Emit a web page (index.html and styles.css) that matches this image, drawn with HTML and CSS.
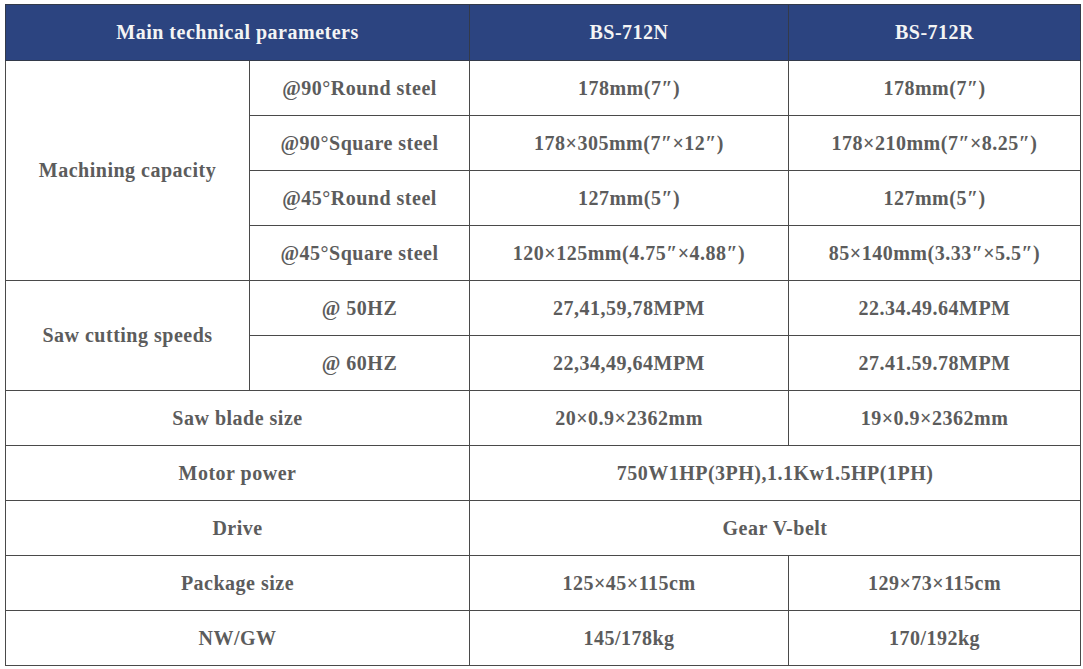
FILE: index.html
```html
<!DOCTYPE html>
<html>
<head>
<meta charset="utf-8">
<link rel="stylesheet" href="styles.css">
</head>
<body>
<table class="spec">
<colgroup>
<col class="c1"><col class="c2"><col class="c3"><col class="c4">
</colgroup>
<thead>
<tr><th colspan="2">Main technical parameters</th><th>BS-712N</th><th>BS-712R</th></tr>
</thead>
<tbody>
<tr><td rowspan="4">Machining capacity</td><td>@90°Round steel</td><td>178mm(7″)</td><td>178mm(7″)</td></tr>
<tr><td>@90°Square steel</td><td>178×305mm(7″×12″)</td><td>178×210mm(7″×8.25″)</td></tr>
<tr><td>@45°Round steel</td><td>127mm(5″)</td><td>127mm(5″)</td></tr>
<tr><td>@45°Square steel</td><td>120×125mm(4.75″×4.88″)</td><td>85×140mm(3.33″×5.5″)</td></tr>
<tr><td rowspan="2">Saw cutting speeds</td><td>@ 50HZ</td><td>27,41,59,78MPM</td><td>22.34.49.64MPM</td></tr>
<tr><td>@ 60HZ</td><td>22,34,49,64MPM</td><td>27.41.59.78MPM</td></tr>
<tr><td colspan="2">Saw blade size</td><td>20×0.9×2362mm</td><td>19×0.9×2362mm</td></tr>
<tr><td colspan="2">Motor power</td><td colspan="2">750W1HP(3PH),1.1Kw1.5HP(1PH)</td></tr>
<tr><td colspan="2">Drive</td><td colspan="2">Gear V-belt</td></tr>
<tr><td colspan="2">Package size</td><td>125×45×115cm</td><td>129×73×115cm</td></tr>
<tr><td colspan="2">NW/GW</td><td>145/178kg</td><td>170/192kg</td></tr>
</tbody>
</table>
</body>
</html>
```
FILE: styles.css
```css
html, body {
  margin: 0;
  padding: 0;
  background: #ffffff;
}
body {
  padding: 4px 0 0 5px;
}
.spec {
  border-collapse: collapse;
  table-layout: fixed;
  width: 1075px;
  font-family: "Liberation Serif", "Times New Roman", serif;
  font-weight: bold;
  font-size: 20px;
  letter-spacing: 0.5px;
  color: #5c5c5c;
  border: 1px solid #8a8a8a;
}
.c1 { width: 244px; }
.c2 { width: 220px; }
.c3 { width: 319px; }
.c4 { width: 292px; }
.spec th {
  background: #2c4480;
  color: #f4f4f4;
  height: 55px;
  padding: 0;
  text-align: center;
  border: 1px solid #333a4a;
  font-weight: bold;
}
.spec td {
  height: 54px;
  padding: 0;
  text-align: center;
  vertical-align: middle;
  border: 1px solid #4a4a4a;
}
```
